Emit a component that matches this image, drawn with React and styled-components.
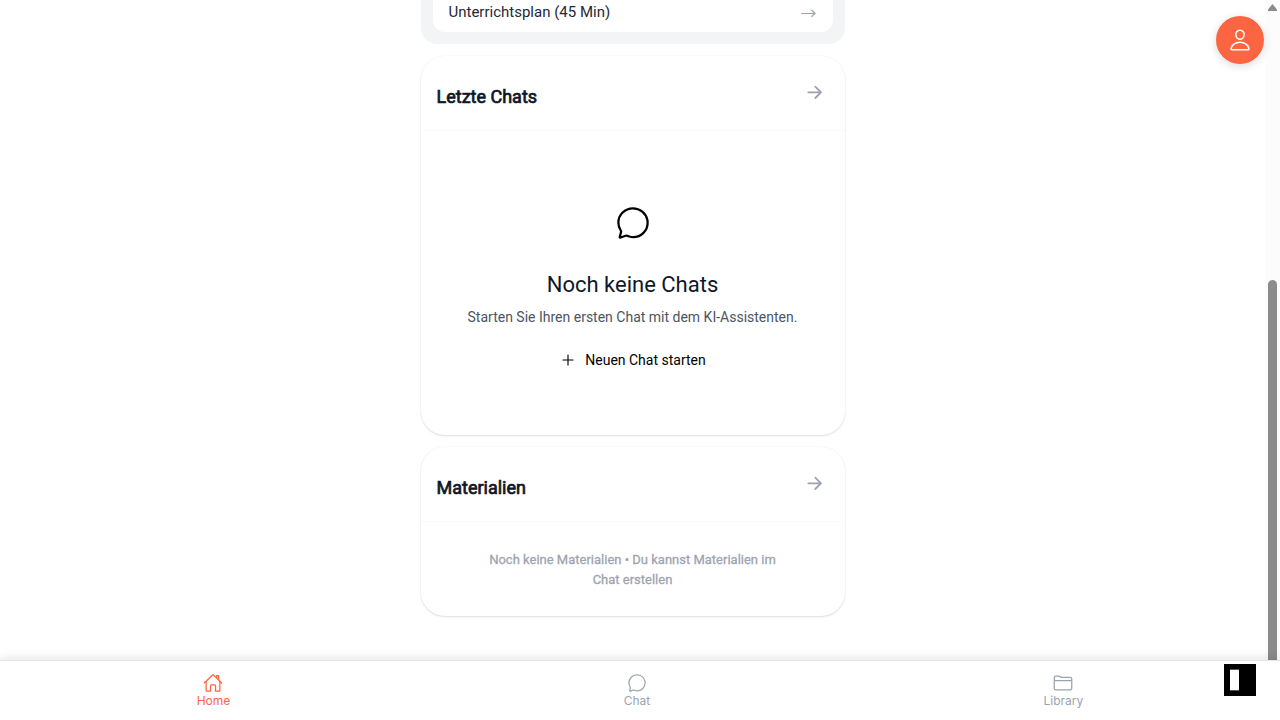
import React from "react";
import styled, { createGlobalStyle } from "styled-components";
import {
  IoHomeOutline,
  IoChatbubbleOutline,
  IoFolderOutline,
  IoPersonOutline,
  IoAddOutline,
} from "react-icons/io5";

const GlobalStyle = createGlobalStyle`
  *, *::before, *::after { box-sizing: border-box; }
  body { margin: 0; background: #fff; font-family: Roboto, "Liberation Sans", sans-serif; color: #0f172a; }
  h2, h3, p { margin: 0; }
  button { border: 0; padding: 0; background: none; font: inherit; color: inherit; cursor: pointer; }
  svg { display: block; }
`;

const Screen = styled.div`
  display: flex;
  flex-direction: column;
  height: 100vh;
  overflow: hidden;
`;

const Viewport = styled.div`
  display: flex;
  flex: 1;
  min-height: 0;
`;

const Main = styled.main`
  flex: 1;
  min-width: 0;
  overflow: hidden;
`;

const Column = styled.div`
  display: flex;
  flex-direction: column;
  gap: 12px;
  max-width: 424px;
  margin: 0 auto;
`;

const PromptPanel = styled.section`
  padding: 0 12px 12px;
  background: #f3f4f6;
  border-radius: 0 0 16px 16px;
`;

const PromptButton = styled.button`
  display: flex;
  justify-content: space-between;
  align-items: center;
  width: 100%;
  padding: 0 16px 8px;
  background: #fff;
  border-radius: 0 0 12px 12px;
  font-size: 15px;
  line-height: 24px;
  color: #1f2937;
`;

const PromptArrow = styled.span`
  font-family: "Noto Sans CJK SC", sans-serif;
  font-size: 16px;
  color: #9ca3af;
`;

const Card = styled.section`
  background: #fff;
  border-radius: 24px;
  box-shadow: 0 0 2px rgba(0, 0, 0, 0.06), 0 1px 2px rgba(0, 0, 0, 0.12);
`;

const CardHeader = styled.header`
  display: flex;
  justify-content: space-between;
  align-items: flex-start;
  padding: 24px 20px 20px 16px;
  border-bottom: 1px solid #f9fafb;
`;

const CardTitle = styled.h2`
  padding-top: 4px;
  font-size: 18px;
  line-height: 26px;
  font-weight: 400;
  -webkit-text-stroke: 0.04em currentColor;
`;

const ArrowButton = styled.button`
  padding-top: 2px;
  color: #9ca3af;
`;

const EmptyChats = styled.div`
  display: flex;
  flex-direction: column;
  align-items: center;
  padding: 74px 16px 65px;
  text-align: center;
`;

const EmptyTitle = styled.h3`
  margin-top: 30px;
  font-size: 22px;
  line-height: 28px;
  font-weight: 400;
`;

const EmptyText = styled.p`
  margin-top: 8px;
  font-size: 14px;
  line-height: 20px;
  color: #4b5563;
`;

const StartButton = styled.button`
  display: flex;
  align-items: center;
  gap: 8px;
  margin-top: 23px;
  font-size: 14px;
  line-height: 20px;
  color: #000;
`;

const EmptyMaterials = styled.p`
  padding: 28px 60px 26px;
  font-size: 13px;
  line-height: 20px;
  text-align: center;
  color: #9ca3af;
  -webkit-text-stroke: 0.02em currentColor;
`;

const ScrollTrack = styled.div`
  display: flex;
  flex-direction: column;
  align-items: center;
  width: 15px;
  background: #fcfcfc;
`;

const ScrollArrow = styled.svg`
  width: 9px;
  height: 7px;
  margin-top: 4px;
  fill: #8b8b8b;
`;

const ScrollThumb = styled.div`
  flex: 1;
  width: 9px;
  margin-top: 269px;
  border-radius: 5px 5px 0 0;
  background: #8b8b8b;
`;

const TabBar = styled.nav`
  position: relative;
  display: flex;
  justify-content: space-around;
  height: 60px;
  padding-top: 12px;
  background: #fff;
  border-top: 1px solid #e5e5e5;
  box-shadow: 0 0 10px rgba(0, 0, 0, 0.14);
`;

const Tab = styled.a`
  display: flex;
  flex-direction: column;
  align-items: center;
  font-size: 12px;
  line-height: 16px;
  font-family: Inter, sans-serif;
  text-decoration: none;
  color: ${(p) => (p.$active ? "#fb6542" : "#9ca3af")};
`;

const ProfileButton = styled.button`
  position: fixed;
  top: 16px;
  right: 16px;
  display: grid;
  place-items: center;
  width: 48px;
  height: 48px;
  border-radius: 50%;
  background: #fb6542;
  color: #fff;
  box-shadow: 0 2px 8px rgba(0, 0, 0, 0.15);
`;

const PanelToggle = styled.button`
  position: fixed;
  right: 24px;
  bottom: 24px;
`;

const Arrow = () => (
  <svg width="20" height="20" viewBox="0 0 20 20" fill="none" stroke="currentColor" strokeWidth="1.800" strokeLinecap="round" strokeLinejoin="round">
    <path d="M3.300 10.300h12.700M10.300 4.600l5.700 5.700-5.700 5.700" />
  </svg>
);

const tabs = [
  { label: "Home", Icon: IoHomeOutline, active: true },
  { label: "Chat", Icon: IoChatbubbleOutline },
  { label: "Library", Icon: IoFolderOutline },
];

export default function App() {
  return (
    <Screen>
      <GlobalStyle />
      <Viewport>
        <Main>
          <Column>
            <PromptPanel>
              <PromptButton>
                <span>Unterrichtsplan (45 Min)</span>
                <PromptArrow>→</PromptArrow>
              </PromptButton>
            </PromptPanel>
            <Card>
              <CardHeader>
                <CardTitle>Letzte Chats</CardTitle>
                <ArrowButton aria-label="Alle Chats"><Arrow /></ArrowButton>
              </CardHeader>
              <EmptyChats>
                <IoChatbubbleOutline size={36} color="#000" />
                <EmptyTitle>Noch keine Chats</EmptyTitle>
                <EmptyText>Starten Sie Ihren ersten Chat mit dem KI-Assistenten.</EmptyText>
                <StartButton>
                  <IoAddOutline size={18} />
                  Neuen Chat starten
                </StartButton>
              </EmptyChats>
            </Card>
            <Card>
              <CardHeader>
                <CardTitle>Materialien</CardTitle>
                <ArrowButton aria-label="Alle Materialien"><Arrow /></ArrowButton>
              </CardHeader>
              <EmptyMaterials>
                Noch keine Materialien • Du kannst Materialien im Chat erstellen
              </EmptyMaterials>
            </Card>
          </Column>
        </Main>
        <ScrollTrack aria-hidden="true">
          <ScrollArrow viewBox="0 0 9 7"><path d="M4.500 0L9 5.500V7H0V5.500Z" /></ScrollArrow>
          <ScrollThumb />
        </ScrollTrack>
      </Viewport>
      <TabBar>
        {tabs.map(({ label, Icon, active }) => (
          <Tab key={label} href="#" $active={active}>
            <Icon size={20} />
            {label}
          </Tab>
        ))}
      </TabBar>
      <ProfileButton aria-label="Profil"><IoPersonOutline size={24} /></ProfileButton>
      <PanelToggle aria-label="Panel umschalten">
        <svg width="32" height="32" viewBox="0 0 32 32">
          <rect width="32" height="32" fill="#000" />
          <rect x="6" y="5" width="9" height="22" fill="#555" />
          <rect x="6" y="6" width="9" height="20" fill="#fff" />
        </svg>
      </PanelToggle>
    </Screen>
  );
}
